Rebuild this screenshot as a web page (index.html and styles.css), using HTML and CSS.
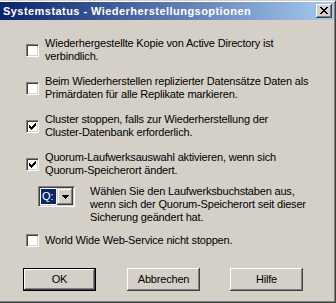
FILE: index.html
```html
<!DOCTYPE html>
<html lang="de">
<head>
<meta charset="utf-8">
<title>Systemstatus - Wiederherstellungsoptionen</title>
<link rel="stylesheet" href="styles.css">
</head>
<body>
<div class="window">
  <div class="titlebar">
    <span class="title">Systemstatus - Wiederherstellungsoptionen</span>
    <span class="close"><svg class="glyph-x" width="8" height="7" viewBox="0 0 8 7"><path d="M0 0h2v1H0z M6 0h2v1H6z M1 1h2v1H1z M5 1h2v1H5z M2 2h4v1H2z M3 3h2v1H3z M2 4h4v1H2z M1 5h2v1H1z M5 5h2v1H5z M0 6h2v1H0z M6 6h2v1H6z"/></svg></span>
  </div>
  <div class="content">
    <div class="opt"><span class="cb"></span><span class="txt">Wiederhergestellte Kopie von Active Directory ist<br>verbindlich.</span></div>
    <div class="opt"><span class="cb"></span><span class="txt">Beim Wiederherstellen replizierter Datensätze Daten als<br>Primärdaten für alle Replikate markieren.</span></div>
    <div class="opt"><span class="cb"><svg class="check" width="7" height="7" viewBox="0 0 7 7"><path d="M6 0h1v1h-1z M5 1h2v1h-2z M0 2h1v1h-1z M4 2h3v1h-3z M0 3h2v1h-2z M3 3h3v1h-3z M0 4h5v1h-5z M1 5h3v1h-3z M2 6h1v1h-1z"/></svg></span><span class="txt">Cluster stoppen, falls zur Wiederherstellung der<br>Cluster-Datenbank erforderlich.</span></div>
    <div class="opt"><span class="cb"><svg class="check" width="7" height="7" viewBox="0 0 7 7"><path d="M6 0h1v1h-1z M5 1h2v1h-2z M0 2h1v1h-1z M4 2h3v1h-3z M0 3h2v1h-2z M3 3h3v1h-3z M0 4h5v1h-5z M1 5h3v1h-3z M2 6h1v1h-1z"/></svg></span><span class="txt">Quorum-Laufwerksauswahl aktivieren, wenn sich<br>Quorum-Speicherort ändert.</span></div>
    <div class="drive-row">
      <div class="combo">
        <span class="combo-val"><span class="combo-sel">Q:</span></span>
        <span class="combo-btn"><svg width="7" height="4" viewBox="0 0 7 4"><path d="M0 0h7v1H0z M1 1h5v1H1z M2 2h3v1H2z M3 3h1v1H3z"/></svg></span>
      </div>
      <span class="txt">Wählen Sie den Laufwerksbuchstaben aus,<br>wenn sich der Quorum-Speicherort seit dieser<br>Sicherung geändert hat.</span>
    </div>
    <div class="opt single"><span class="cb"></span><span class="txt">World Wide Web-Service nicht stoppen.</span></div>
    <div class="buttons">
      <span class="btn default">OK</span>
      <span class="btn">Abbrechen</span>
      <span class="btn last">Hilfe</span>
    </div>
  </div>
</div>
</body>
</html>
```
FILE: styles.css
```css
html, body {
  margin: 0;
  padding: 0;
}
body {
  width: 336px;
  height: 303px;
  overflow: hidden;
  background: #d4d0c8;
  font-family: "Liberation Sans", Arial, sans-serif;
  font-size: 11px;
  color: #000;
}
.window {
  box-sizing: border-box;
  width: 336px;
  height: 303px;
  background: #d4d0c8;
  border-top: 1px solid #d4d0c8;
  border-right: 1px solid #404040;
  border-bottom: 1px solid #404040;
  box-shadow: inset 0 1px #ffffff, inset -1px -1px #808080;
  padding: 1px 1px 1px 0;
  display: flex;
  flex-direction: column;
}
.titlebar {
  height: 18px;
  flex: none;
  display: flex;
  align-items: center;
  justify-content: space-between;
  padding: 0 2px 0 3px;
  background: linear-gradient(to right, #0a246a, #a6caf0);
}
.title {
  color: #fff;
  font-weight: bold;
  font-size: 11px;
  letter-spacing: 0.45px;
  line-height: 18px;
  white-space: nowrap;
}
.close {
  width: 16px;
  height: 14px;
  box-sizing: border-box;
  background: #d4d0c8;
  box-shadow: inset -1px -1px #404040, inset 1px 1px #ffffff, inset -2px -2px #808080, inset 2px 2px #d4d0c8;
  padding: 3px 0 0 4px;
  flex: none;
}
.glyph-x, .check, .combo-btn svg {
  display: block;
  shape-rendering: crispEdges;
  fill: #000;
}
.content {
  padding: 17px 0 0 26px;
  display: flex;
  flex-direction: column;
}
.txt {
  line-height: 13px;
  letter-spacing: -0.18px;
  white-space: nowrap;
}
.opt {
  display: flex;
  align-items: center;
  gap: 6px;
  margin-bottom: 12px;
}
.opt:nth-child(4) {
  margin-bottom: 8px;
}
.cb {
  flex: none;
  width: 13px;
  height: 13px;
  box-sizing: border-box;
  background: #fff;
  border: 1px solid;
  border-color: #808080 #ffffff #ffffff #808080;
  box-shadow: inset 1px 1px #404040, inset -1px -1px #d4d0c8;
  padding: 2px;
}
.drive-row {
  display: flex;
  align-items: flex-start;
  padding-left: 12px;
  gap: 15px;
  margin-bottom: 10px;
}
.combo {
  flex: none;
  margin-top: 1px;
  width: 37px;
  height: 21px;
  box-sizing: border-box;
  background: #fff;
  border: 1px solid;
  border-color: #808080 #ffffff #ffffff #808080;
  box-shadow: inset 1px 1px #404040, inset -1px -1px #d4d0c8;
  padding: 1px;
  display: flex;
}
.combo-val {
  flex: 1;
  padding: 1px;
  display: flex;
}
.combo-sel {
  flex: 1;
  background: #0a246a;
  color: #fff;
  line-height: 15px;
  padding-left: 1px;
  letter-spacing: -0.18px;
}
.combo-btn {
  flex: none;
  width: 16px;
  height: 17px;
  box-sizing: border-box;
  background: #d4d0c8;
  box-shadow: inset -1px -1px #404040, inset 1px 1px #d4d0c8, inset -2px -2px #808080, inset 2px 2px #ffffff;
  display: flex;
  align-items: center;
  justify-content: center;
  padding: 1px 0 0 0;
}
.opt.single {
  margin-bottom: 21px;
}
.buttons {
  display: flex;
  padding-left: 23px;
  margin-left: -26px;
}
.btn {
  width: 75px;
  height: 23px;
  box-sizing: border-box;
  background: #d4d0c8;
  box-shadow: inset -1px -1px #404040, inset 1px 1px #ffffff, inset -2px -2px #808080, inset 2px 2px #d4d0c8;
  display: flex;
  align-items: center;
  justify-content: center;
  line-height: 13px;
  letter-spacing: -0.18px;
  margin-right: 31px;
}
.btn.default {
  border: 1px solid #000;
}
.btn.last {
  margin-left: -1px;
}
```
